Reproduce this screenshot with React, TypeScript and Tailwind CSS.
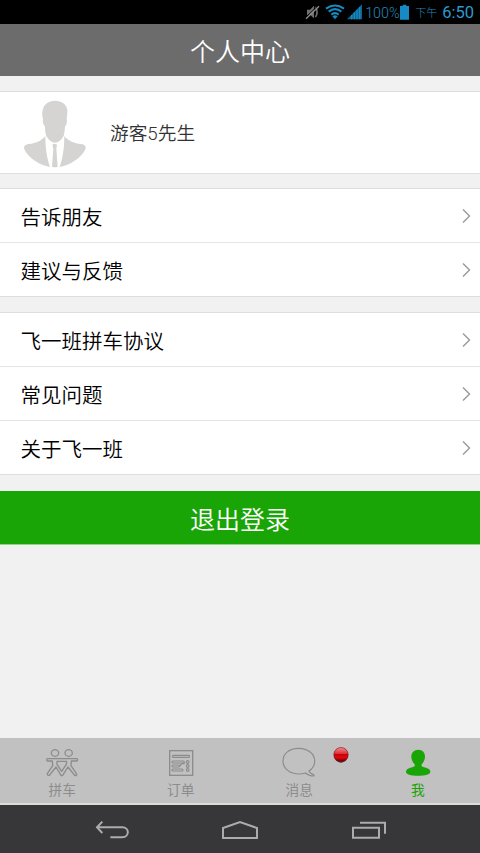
import type { ReactNode } from "react";

function StatusBar() {
  return (
    <div className="flex h-6 shrink-0 items-center justify-end bg-black pr-[6px] font-['Roboto','Noto_Sans_CJK_SC',sans-serif] text-[#1c82b4]">
      <svg className="mr-[5px] h-4 w-[15px]" viewBox="0 0 45 48">
        <path d="M6 17h9L27 5v38L15 32H6z" fill="#707070" />
        <path d="M31 9c7 9 7 22 0 30" stroke="#707070" strokeWidth="5" fill="none" />
        <path d="M1 41 39 5" stroke="#000" strokeWidth="3" />
        <path d="M3 44 42 7" stroke="#8d8d8d" strokeWidth="4" />
      </svg>
      <svg className="mr-[2px] h-4 w-5" viewBox="0 0 60 48" fill="none" stroke="#168ac2" strokeWidth="6.5">
        <path d="M3 14Q30-5 57 14M11 23Q30 8 49 23M19 32Q30 23 41 32" />
        <path d="M22 37q8-6 16 0l-8 9z" fill="#168ac2" stroke="none" />
      </svg>
      <svg className="mr-[3px] h-4 w-[15px]" viewBox="0 0 45 48">
        <path d="M0 46 45 1v45z" fill="#0d668f" />
        <path d="M14 33v13M22 25v21M30 17v29M38 9v37" stroke="#168ac2" strokeWidth="4" />
      </svg>
      <span className="w-[35px] whitespace-nowrap pt-[2px] text-[14.3px] font-light leading-[22px] text-[#2089bd]">100%</span>
      <svg className="mr-[6px] h-4 w-[9px]" viewBox="0 0 27 48">
        <path d="M0 6h8V2h11v4h8v41H0z" fill="#168ac2" />
      </svg>
      <span className="mr-[5px] pt-[4px] text-[11px] font-light leading-5 text-[#2089bd]">下午</span>
      <span className="pt-px text-[16.5px] font-normal leading-[23px] text-[#2b9bd0]">6:50</span>
    </div>
  );
}

function Avatar() {
  return (
    <svg className="mt-[2px] h-[68px] w-[62px] shrink-0" viewBox="73 60 186 204">
      <g fill="#d5d4d2">
        <path d="M128 96c2-18 13-34 38-34 24 0 40 15 37 37l-2 18c2 7 0 20-5 22-1 12-1 19-4 29-6 11-16 20-26 20s-20-9-26-20c-3-9-4-17-4-29-6-4-8-15-6-22-2-7-3-14-2-21z" />
        <path d="M137 168c-8 12-27 22-50 24-12 1-17 9-12 18 12 24 45 46 76 51-10-27-14-62-14-93z" />
        <path d="M194 168c8 12 27 22 50 24 13 1 17 9 12 18-12 24-45 46-76 51 10-27 14-62 14-93z" />
        <path d="M158 194q7-5 14 0l-2 12 4 54q-9 3-17 0l4-54z" />
      </g>
    </svg>
  );
}

function Row({ label, last }: { label: string; last?: boolean }) {
  return (
    <div className={last ? "flex h-[53px] items-center justify-between pl-[20.5px] pr-[9.5px]" : "flex h-[54px] items-center justify-between border-b border-[#e4e4e4] pl-[20.5px] pr-[9.5px]"}>
      <span className="text-[20.5px] font-[350] leading-[30px] text-black">{label}</span>
      <svg className="h-4 w-[9px]" viewBox="0 0 9 16" fill="none" stroke="#999" strokeWidth="1.4">
        <path d="m1 1.5 6.5 6.5L1 14.5" />
      </svg>
    </div>
  );
}

function Group({ labels }: { labels: string[] }) {
  return (
    <div className="mt-[14px] shrink-0 border-y border-[#dedede] bg-white">
      {labels.map((label, i) => (
        <Row key={label} label={label} last={i === labels.length - 1} />
      ))}
    </div>
  );
}

function Tab({ label, active, children }: { label: string; active?: boolean; children: ReactNode }) {
  return (
    <div className={active ? "flex w-[118.5px] flex-col items-center text-[#1aa506]" : "flex w-[118.5px] flex-col items-center text-[#8c8c8c]"}>
      <div className="relative mt-[9px] h-8">{children}</div>
      <span className="text-[13.7px] leading-5">{label}</span>
    </div>
  );
}

function PeopleIcon() {
  return (
    <svg className="h-[30px] w-[34px]" viewBox="137 37 102 90" fill="none" stroke="currentColor" strokeWidth="4" strokeLinejoin="round">
      <ellipse cx="167" cy="55" rx="11" ry="10" />
      <ellipse cx="208" cy="55" rx="11" ry="10" />
      <path d="M144 72h89q4 3 0 7h-17l-1 14 17 25q0 6-6 4l-20-25-16 25q-4 2-5 0l-15-25-20 25q-7 1-6-5l16-24-1-14h-15q-4-4 0-7z" />
      <path d="M173 80h29l-1 9-14 21-14-21z" />
    </svg>
  );
}

function OrderIcon() {
  return (
    <svg className="h-[30px] w-[26px]" viewBox="503 37 78 90" fill="none" stroke="currentColor" strokeWidth="4">
      <rect x="508" y="48" width="69" height="74" />
      <g strokeWidth="3.5">
        <rect x="516" y="62" width="52" height="6" rx="3" />
        <rect x="515" y="79" width="37" height="6" rx="3" />
        <rect x="515" y="91" width="23" height="6" rx="3" />
        <rect x="515" y="103" width="33" height="6" rx="3" />
        <path d="m538 94 7-7h8" />
        <circle cx="562" cy="82" r="4" />
        <circle cx="562" cy="94" r="4" />
        <circle cx="562" cy="106" r="4" />
      </g>
    </svg>
  );
}

function MessageIcon() {
  return (
    <>
      <svg className="h-[30px] w-[34px]" viewBox="125 37 102 90" fill="none" stroke="currentColor" strokeWidth="3.5">
        <path d="M206 109c11-7 17-17 17-30 0-21-20-38-48-38s-47 16-47 38c0 23 21 39 48 39 8 0 14-1 19-3 7 6 15 9 25 9 2 0 2-2 0-4-7-1-11-5-14-11z" />
      </svg>
      <svg className="absolute top-0 left-[50.5px] h-4 w-4" viewBox="0 0 48 48">
        <defs>
          <linearGradient id="ball" x2="0" y2="1">
            <stop stopColor="#ed8c90" />
            <stop offset=".42" stopColor="#dc3339" />
            <stop offset=".46" stopColor="#c70008" />
            <stop offset=".7" stopColor="#e00710" />
            <stop offset="1" stopColor="#500003" />
          </linearGradient>
        </defs>
        <circle cx="24" cy="26" r="21" fill="#333" />
        <circle cx="24" cy="23" r="21.5" fill="url(#ball)" stroke="#8d171b" strokeWidth="2" />
      </svg>
    </>
  );
}

function MeIcon() {
  return (
    <svg className="h-[30px] w-[26px]" viewBox="492 37 78 90" fill="currentColor">
      <path d="M532 45c13 0 20 9 20 21 0 8-4 17-10 23-2 7 3 8 13 10 9 2 13 6 13 12 0 8-15 12-37 12s-36-4-36-12c0-6 5-10 13-12 10-2 15-3 13-10-6-6-10-15-10-23 0-12 8-21 21-21z" />
    </svg>
  );
}

export default function App() {
  return (
    <div className="flex h-[853px] w-[480px] flex-col overflow-hidden bg-[#f1f1f1] font-['Noto_Sans_CJK_SC',sans-serif]">
      <StatusBar />
      <header className="flex h-[52px] shrink-0 items-center justify-center bg-[#6c6c6c] pt-px text-[25px] font-[350] text-white">
        个人中心
      </header>
      <div className="mt-[15px] flex h-[83px] shrink-0 items-center border-y border-[#dedede] bg-white pl-6">
        <Avatar />
        <span className="ml-6 pt-[3px] font-['Roboto','Noto_Sans_CJK_SC',sans-serif] text-[18.7px] font-[350] text-[#333]">游客5先生</span>
      </div>
      <Group labels={["告诉朋友", "建议与反馈"]} />
      <div className="h-px shrink-0" />
      <Group labels={["飞一班拼车协议", "常见问题", "关于飞一班"]} />
      <button className="mt-4 flex h-[54px] w-full shrink-0 items-center justify-center border-b border-[#8fd486] bg-[#1aa506] pt-[2px] text-[25px] font-[350] text-white">
        退出登录
      </button>
      <nav className="mt-auto flex h-[67px] shrink-0 border-b-2 border-[#dcdcdc] bg-[#c1c1c1] pl-[3px]">
        <Tab label="拼车"><PeopleIcon /></Tab>
        <Tab label="订单"><OrderIcon /></Tab>
        <Tab label="消息"><MessageIcon /></Tab>
        <Tab label="我" active><MeIcon /></Tab>
      </nav>
      <div className="flex h-12 shrink-0 items-center bg-[#373739] pl-[95px] pt-[2px]">
        <svg className="h-[18px] w-[35px]" viewBox="285 260 105 54" fill="none" stroke="#acacac" strokeWidth="6">
          <path d="m307 262-16 17 16 17M291 279h76c22 0 22 29 0 30h-36" />
        </svg>
        <svg className="ml-[91px] h-5 w-[38px]" viewBox="0 0 38 20" fill="none" stroke="#acacac" strokeWidth="2">
          <path d="M2 18V8l17-6 17 6v10z" />
        </svg>
        <svg className="ml-[92px] h-[18px] w-[35px]" viewBox="333 259 105 54" fill="none" stroke="#acacac" strokeWidth="6">
          <path d="M339 279h78v30h-78zM360 264h75v33" />
        </svg>
      </div>
    </div>
  );
}
